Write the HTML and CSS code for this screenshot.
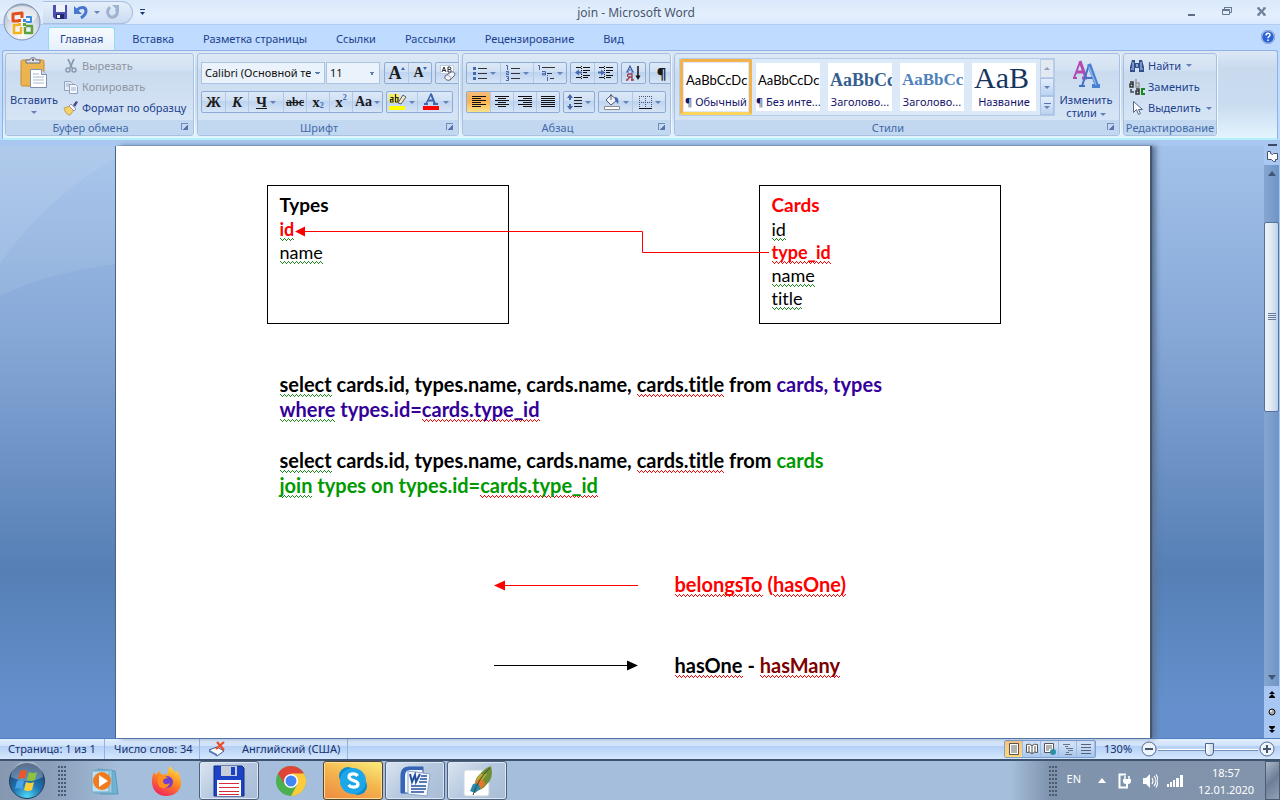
FILE: index.html
```html
<!DOCTYPE html>
<html lang="ru">
<head>
<meta charset="utf-8">
<title>join - Microsoft Word</title>
<link rel="stylesheet" href="styles.css">
</head>
<body>
<header class="titlebar">
  <div class="quick">
    <button class="plain" aria-label="Сохранить"><svg width="16" height="16" viewBox="0 0 16 16"><path d="M1 1h14v14H3l-2-2z" fill="#4a4fb0"/><path d="M4 1h9v7H4z" fill="#eef3fc"/><path d="M4 10h8v5H4z" fill="#23276e"/><path d="M5 11h3v3H5z" fill="#fff"/></svg></button>
    <button class="plain" aria-label="Отменить"><svg width="16" height="16" viewBox="0 0 16 16"><path d="M4 6c4-4 9-3 9 1 0 3-2 5-5 7" fill="none" stroke="#4777cf" stroke-width="3"/><path d="M1 2v8h8z" fill="#4777cf"/></svg></button>
    <i class="arrow"></i>
    <button class="plain redo" aria-label="Повторить"><svg width="16" height="16" viewBox="0 0 16 16"><path d="M5 3C0 8 4 14 8 13c5-1 5-6 3-8" fill="none" stroke="#9eb3d0" stroke-width="3"/><path d="M7 1h7v7z" fill="#9eb3d0"/></svg></button>
  </div>
  <button class="plain customize" aria-label="Настройка панели"><svg width="7" height="8" viewBox="0 0 7 8"><path d="M1 1h5v1H1zM1 4h5L3.500 7z" fill="#1c3c78"/></svg></button>
  <h1 class="title">join - Microsoft Word</h1>
  <div class="winctl">
    <button class="plain" aria-label="Свернуть"><svg width="12" height="12" viewBox="0 0 12 12"><path d="M2 8h7v2H2z" fill="#5d6c85"/></svg></button>
    <button class="plain" aria-label="Развернуть"><svg width="12" height="12" viewBox="0 0 12 12"><path d="M3.500 4V1.500h7v5H9M1.500 3.500h7v5h-7z" fill="none" stroke="#667794"/><path d="M1 3h8v2H1zM3 1h8v1H3z" fill="#667794"/></svg></button>
    <button class="plain" aria-label="Закрыть"><svg width="12" height="12" viewBox="0 0 12 12"><path d="M2 2l7 7M9 2l-7 7" stroke="#72819b" stroke-width="2.400"/><path d="M1 2h3M7 2h3M1 9h3M7 9h3" stroke="#667794" stroke-width="1"/></svg></button>
  </div>
</header>
<button class="plain orb" aria-label="Кнопка Office"><svg width="38" height="38" viewBox="0 0 38 38">
  <defs><radialGradient id="orbg" cx=".5" cy=".8" r=".8"><stop offset="0" stop-color="#fff"/><stop offset=".5" stop-color="#dbe2ed"/><stop offset="1" stop-color="#a3b0c4"/></radialGradient></defs>
  <circle cx="19" cy="19" r="18" fill="url(#orbg)" stroke="#8093b2"/><ellipse cx="19" cy="12" rx="15" ry="9" fill="#fff" opacity=".6"/>
  <g fill="none" stroke-width="3" stroke-linejoin="round"><path d="M16 18h-6v-7l9-1v5" stroke="#e2501b"/><path d="M23 14h5v5h-5" stroke="#3b8cd8" stroke-width="2"/><path d="M16 22h-5v8h7v-6" stroke="#f5b31c" stroke-width="2.500"/><path d="M23 23h6v7h-7v-6" stroke="#5ea13b" stroke-width="2.500"/></g>
  <g><path d="M20 16h3v3h-3z" fill="#3b8cd8"/><path d="M15 20h3v3h-3z" fill="#f5b31c"/><path d="M20 20h3v3h-3z" fill="#5ea13b"/><path d="M15 16h3v3h-3z" fill="#e2501b"/></g></svg></button>
<nav class="tabs">
  <a class="tab active" href="#home">Главная</a>
  <a class="tab" href="#insert">Вставка</a>
  <a class="tab" href="#layout">Разметка страницы</a>
  <a class="tab" href="#links">Ссылки</a>
  <a class="tab" href="#mail">Рассылки</a>
  <a class="tab" href="#review">Рецензирование</a>
  <a class="tab" href="#view">Вид</a>
  <button class="plain help" aria-label="Справка"><svg width="14" height="14" viewBox="0 0 14 14"><circle cx="7" cy="7" r="6.400" fill="#2a62d8" stroke="#fff"/><circle cx="7" cy="7" r="6.800" fill="none" stroke="#446cb4" stroke-width=".6"/><path d="M5 5.500c0-3 4-3 4-.5 0 1.500-2 1.500-2 3.200M7 9.500v1.500" fill="none" stroke="#fff" stroke-width="1.500"/></svg></button>
</nav>
<section class="ribbon">
  <section class="group g-clip">
    <div class="body clip">
      <button class="plain big paste"><svg width="28" height="32" viewBox="0 0 28 32"><rect x="1" y="3" width="23" height="26" rx="1.500" fill="#ecb450" stroke="#c98d31"/><path d="M6 3h4c0-3 6-3 6 0h4v3H6z" fill="#dfe2e8" stroke="#686f7e"/><circle cx="13" cy="3" r="1" fill="#444"/><path d="M10.500 12.500h11l5 5v13h-16z" fill="#fff" stroke="#7f8eaa"/><path d="M21.500 12.500v5h5" fill="#cdd9ef" stroke="#7f8eaa"/><path d="M13 17h6M13 20h11M13 23h11M13 26h11" stroke="#a6b7d6"/></svg>Вставить<i class="arrow"></i></button>
      <div class="stack">
        <button class="plain item off"><svg width="16" height="16" viewBox="0 0 16 16"><path d="M5 1l4 9M11 1L7 10" stroke="#8b99ae" stroke-width="1.800" fill="none"/><g fill="none" stroke="#8b99ae" stroke-width="1.500"><circle cx="5" cy="12" r="2"/><circle cx="11" cy="12" r="2"/></g></svg>Вырезать</button>
        <button class="plain item off"><svg width="16" height="16" viewBox="0 0 16 16"><path d="M1.500 2.500h6l2 2v7h-8z" fill="#e9eff8" stroke="#91a2bd"/><path d="M6.500 5.500h6l2 2v7h-8z" fill="#f4f8fd" stroke="#91a2bd"/><path d="M3 5h4M3 7h3M8 9h5M8 11h5" stroke="#9bacc8"/></svg>Копировать</button>
        <button class="plain item"><svg width="16" height="16" viewBox="0 0 16 16"><path d="M1 8l6-2 4 4-4 5c-3 0-5-3-6-7z" fill="#f3d269" stroke="#b69437" stroke-width=".8"/><path d="M6 6l2-2 5 5-2 2z" fill="#f4f5fa" stroke="#767c93" stroke-width=".7"/><path d="M10 5l3-4 2 1-3 5z" fill="#51478a"/></svg>Формат по образцу</button>
      </div>
    </div>
    <h2 class="cap">Буфер обмена<i class="launch"></i></h2>
  </section>

  <section class="group g-font">
    <div class="body rows">
      <div class="row">
        <span class="combos"><select class="combo wide" aria-label="Шрифт"><option>Calibri (Основной текст)</option></select><select class="combo" aria-label="Размер шрифта"><option>11</option></select></span>
        <span class="bg"><button class="b"><span class="serif s18">A</span><i class="tri up"></i></button><button class="b"><span class="serif s14">A</span><i class="tri down"></i></button></span>
        <span class="bg"><button class="b" aria-label="Очистить формат"><svg width="18" height="18" viewBox="0 0 18 18"><rect x="1.500" y="1.500" width="13" height="8" fill="#fff" stroke="#c2cde0"/><path d="M3 8l2-5 2 5M4 6.500h2M9 3v5h2c2 0 1-2.500 0-2.500H9h2c1.500 0 1-2.500 0-2.500z" fill="none" stroke="#2b2f3a" stroke-width="1"/><path d="M6 12l6-4c3-1 5 2 3 4l-4 4c-3 1-6-1-5-4z" fill="#f3f4fa" stroke="#59617a"/><path d="M8 11c2 0 4 2 4 4" fill="none" stroke="#8d95ad"/></svg></button></span>
      </div>
      <div class="row">
        <span class="bg">
          <button class="b serif"><b>Ж</b></button><button class="b serif"><b><em>К</em></b></button><button class="b w36 serif"><b><u>Ч</u></b><i class="arrow"></i></button><button class="b serif s11"><s>abc</s></button><button class="b serif"><b>x</b><sub>2</sub></button><button class="b serif"><b>x</b><sup>2</sup></button><button class="b w30 serif s14"><span>Aa</span><i class="arrow"></i></button>
        </span>
        <span class="bg">
          <button class="b w30" aria-label="Цвет выделения"><svg width="18" height="18" viewBox="0 0 18 18"><path d="M0 1h10v9H0z" fill="#f8ef50"/><path d="M1.500 4.500h2.500v4.500H1.500V6.500H4M6.500 1v8H9V4.500H6.500" fill="none" stroke="#222" stroke-width="1.200"/><path d="M9 10l5-8 3 2-5 7z" fill="#f6e7be" stroke="#555c71"/><path d="M0 13h16v4H0z" fill="#ff0"/></svg><i class="arrow"></i></button><button class="b w36" aria-label="Цвет текста"><svg width="18" height="18" viewBox="0 0 18 18"><path d="M4 11L9 1l4 10" fill="none" stroke="#4065af" stroke-width="1.500"/><path d="M9 1l4 10M6 7.500h6M2 11h4M11 11h5" fill="none" stroke="#4065af" stroke-width="2"/><path d="M1 13h16v4H1z" fill="red"/></svg><i class="arrow"></i></button>
        </span>
      </div>
    </div>
    <h2 class="cap">Шрифт<i class="launch"></i></h2>
  </section>

  <section class="group g-para">
    <div class="body rows">
      <div class="row">
        <span class="bg">
          <button class="b w33" aria-label="Маркеры"><svg width="16" height="16" viewBox="0 0 16 16"><path d="M1 2h3v3H1zM1 7h3v3H1zM1 12h3v3H1z" fill="#4669ad"/><path d="M6 3.500h9M6 8.500h9M6 13.500h9" stroke="#333"/></svg><i class="arrow"></i></button><button class="b w33" aria-label="Нумерация"><svg width="16" height="16" viewBox="0 0 16 16"><path d="M1 .5h1.500V5M1 6.500h2.500V8H1.500v1.500H4M1 11.500h2.500v4H1M2 13.500h1" fill="none" stroke="#4669ad"/><path d="M6 3.500h9M6 8.500h9M6 13.500h9" stroke="#333"/></svg><i class="arrow"></i></button><button class="b w33" aria-label="Многоуровневый список"><svg width="18" height="16" viewBox="0 0 18 16"><path d="M1 .5h1.500V5M5 6.500h3.500V10H5.500V8.500H8M10.500 12v4M10.500 10v1" fill="none" stroke="#4669ad"/><path d="M5 2.500h13M10 8.500h5M13 13.500h4" stroke="#333"/></svg><i class="arrow"></i></button>
        </span>
        <span class="bg">
          <button class="b" aria-label="Уменьшить отступ"><svg width="16" height="16" viewBox="0 0 16 16"><path d="M1 2.500h5M8 2.500h7M8 5.500h7M8 7.500h4M8 10.500h7M1 12.500h5M8 12.500h5" stroke="#111" stroke-width="1.200"/><path d="M6.500 1v14" stroke="#111" stroke-dasharray="1 1"/><path d="M0 7.500l4-3v2h3v2H4v2z" fill="#4669ad"/></svg></button><button class="b" aria-label="Увеличить отступ"><svg width="16" height="16" viewBox="0 0 16 16"><path d="M1 2.500h5M8 2.500h7M8 5.500h7M8 7.500h4M8 10.500h7M1 12.500h5M8 12.500h5" stroke="#111" stroke-width="1.200"/><path d="M6.500 1v14" stroke="#111" stroke-dasharray="1 1"/><path d="M7 7.500l-4-3v2H0v2h3v2z" fill="#4669ad"/></svg></button>
        </span>
        <span class="bg"><button class="b" aria-label="Сортировка"><svg width="16" height="16" viewBox="0 0 16 16"><path d="M1 7l3-6 3 6M2 5h4M0 7h3M5 7h3" fill="none" stroke="#4065af" stroke-width="1.200"/><path d="M6 15V9H3c-2 0-2 3 0 3h3M4 12l-3 3M0 15h2M5 15h3" fill="none" stroke="#9b3b46" stroke-width="1.300"/><path d="M12 1v12" stroke="#111" stroke-width="1.500"/><path d="M9.500 10.500h5L12 15z" fill="#111"/></svg></button></span>
        <span class="bg"><button class="b s15">¶</button></span>
      </div>
      <div class="row">
        <span class="bg">
          <button class="b on" aria-label="По левому краю"><svg width="16" height="14" viewBox="0 0 16 14"><path d="M1 1.500h14M1 3.500h9M1 5.500h14M1 7.500h9M1 9.500h14M1 11.500h9" stroke="#111" stroke-width="1.200"/></svg></button><button class="b" aria-label="По центру"><svg width="16" height="14" viewBox="0 0 16 14"><path d="M1 1.500h14M4 3.500h8M1 5.500h14M4 7.500h8M1 9.500h14M4 11.500h8" stroke="#111" stroke-width="1.200"/></svg></button><button class="b" aria-label="По правому краю"><svg width="16" height="14" viewBox="0 0 16 14"><path d="M1 1.500h14M6 3.500h9M1 5.500h14M6 7.500h9M1 9.500h14M6 11.500h9" stroke="#111" stroke-width="1.200"/></svg></button><button class="b" aria-label="По ширине"><svg width="16" height="14" viewBox="0 0 16 14"><path d="M1 1.500h14M1 3.500h14M1 5.500h14M1 7.500h14M1 9.500h14M1 11.500h14" stroke="#111" stroke-width="1.200"/></svg></button>
        </span>
        <span class="bg"><button class="b w30" aria-label="Междустрочный интервал"><svg width="16" height="16" viewBox="0 0 16 16"><path d="M3 0l3 4H4v2H2V4H0zM3 16l-3-4h2v-2h2v2h2z" fill="#4669ad"/><path d="M7 3.500h8M7 6.500h8M7 9.500h8M7 12.500h8" stroke="#222" stroke-width="1.200"/></svg><i class="arrow"></i></button></span>
        <span class="bg">
          <button class="b w33" aria-label="Заливка"><svg width="18" height="18" viewBox="0 0 18 18"><path d="M3 7l5-5 6 5-6 5z" fill="#f1f4fa" stroke="#50586c"/><path d="M8 7V1" stroke="#50586c"/><path d="M12 4c3 0 4 3 3 7l-3-4z" fill="#3d67b5"/><path d="M1.500 13.500h15v3h-15z" fill="#fff" stroke="#8c8c8c"/></svg><i class="arrow"></i></button><button class="b w33" aria-label="Границы"><svg width="16" height="16" viewBox="0 0 16 16"><path d="M2 2.500h13M2 8.500h13M2.500 2v12M8.500 2v12M14.500 2v12" stroke="#4b5875" stroke-dasharray="1 1"/><path d="M2 14.500h13" stroke="#111"/></svg><i class="arrow"></i></button>
        </span>
      </div>
    </div>
    <h2 class="cap">Абзац<i class="launch"></i></h2>
  </section>

  <section class="group g-style">
    <div class="body styles">
      <div class="gallery">
        <button class="style sel"><span class="card"><span class="sample">AaBbCcDc</span><span class="name">¶ Обычный</span></span></button>
        <button class="style"><span class="card"><span class="sample">AaBbCcDc</span><span class="name">¶ Без инте...</span></span></button>
        <button class="style"><span class="card"><span class="sample h1s">AaBbCc</span><span class="name">Заголово...</span></span></button>
        <button class="style"><span class="card"><span class="sample h2s">AaBbCc</span><span class="name">Заголово...</span></span></button>
        <button class="style"><span class="card"><span class="sample ts">AaB</span><span class="name">Название</span></span></button>
        <div class="spin"><button class="sb off" aria-label="Вверх"><i class="arrow flip"></i></button><button class="sb" aria-label="Вниз"><i class="arrow"></i></button><button class="sb more" aria-label="Ещё"><i class="arrow"></i></button></div>
      </div>
      <button class="plain big change"><svg width="30" height="30" viewBox="0 0 30 30"><path d="M3 19L9 3M2 19h4" fill="none" stroke="#b04bb0" stroke-width="2"/><path d="M9 2l6 17M5 13h8M11 19h5" fill="none" stroke="#b04bb0" stroke-width="3"/><path d="M11 27L18 6M8 27h6M13 19h9" fill="none" stroke="#3f72c4" stroke-width="2"/><path d="M18 5l8 22M21 27h8" fill="none" stroke="#4a80d4" stroke-width="4"/><path d="M18 8l7 18" stroke="#8db4ee" stroke-width="1.500"/></svg><span class="two">Изменить<br>стили <i class="arrow"></i></span></button>
    </div>
    <h2 class="cap">Стили<i class="launch"></i></h2>
  </section>

  <section class="group g-edit">
    <div class="body stack edit">
      <button class="plain item"><svg width="16" height="16" viewBox="0 0 16 16"><path d="M3 2h3v3h4V2h3l2 7v5h-5v-4H6v4H1V9z" fill="#2f4f8c"/><path d="M4 4v6M12 4v6M2 11h3M11 11h3" stroke="#c7d8f2"/><path d="M7 6h2v3H7z" fill="#88a6d8"/></svg>Найти<i class="arrow"></i></button>
      <button class="plain item"><svg width="16" height="16" viewBox="0 0 16 16"><g fill="none" stroke-width="1.500"><path d="M1 3h3v5H1V5h3" stroke="#333"/><path d="M7 0v8h3V4H7" stroke="#999"/><path d="M7 10h3v5H7v-3h3" stroke="#333"/><path d="M16 10h-3v5h3" stroke="#188a18" stroke-width="2"/><path d="M2 10v3h3" stroke="#445"/></g></svg>Заменить</button>
      <button class="plain item"><svg width="16" height="16" viewBox="0 0 16 16"><path d="M4.500 1.500v11l3-3 2 5 2-1-2-4h4z" fill="#fff" stroke="#54658c"/></svg>Выделить<i class="arrow"></i></button>
    </div>
    <h2 class="cap">Редактирование</h2>
  </section>
</section>

<main class="workspace">
  <div class="desk">
    <svg class="swoosh" viewBox="0 0 116 592" preserveAspectRatio="none" aria-hidden="true"><path d="M0 0h116v118Q50 126 0 150z" fill="#fff" opacity=".08"/><path d="M0 0h116v12Q45 52 0 118z" fill="#fff" opacity=".08"/></svg>
    <article class="page">
      <div class="diagram">
        <div class="entity"><h3>Types</h3><p><b class="red gr">id</b></p><p><span class="gr">name</span></p></div>
        <div class="entity"><h3 class="red">Cards</h3><p><span class="gr">id</span></p><p><b class="red rd">type_id</b></p><p><span class="gr">name</span></p><p><span class="gr">title</span></p></div>
        <svg class="link" width="474" height="28" viewBox="0 0 474 28" aria-hidden="true"><path d="M8 6.500h339.500v21H474" fill="none" stroke="red"/><path d="M0 6.500l10-5v10z" fill="red"/></svg>
      </div>
      <div class="query">
        <p><span class="gr">select</span> cards.id, types.name, cards.name, <span class="rd">cards.title</span> from <span class="blue">cards, types</span></p>
        <p class="blue"><span class="gr">where</span> types.id=<span class="rd">cards.type_id</span></p>
      </div>
      <div class="query">
        <p><span class="gr">select</span> cards.id, types.name, cards.name, <span class="rd">cards.title</span> from <span class="green">cards</span></p>
        <p class="green"><span class="gr">join</span> types on types.id=<span class="rd">cards.type_id</span></p>
      </div>
      <div class="legend">
        <svg width="144" height="13" viewBox="0 0 144 13" aria-hidden="true"><path d="M8 7.500h136" stroke="red"/><path d="M0 7.500l11-5v10z" fill="red"/></svg>
        <p class="red"><span class="rd">belongsTo</span> (<span class="rd">hasOne)</span></p>
        <svg width="144" height="13" viewBox="0 0 144 13" aria-hidden="true"><path d="M0 6.500h136" stroke="#000"/><path d="M144 6.500l-11-5v10z"/></svg>
        <p><span class="rd">hasOne</span> - <span class="maroon rd">hasMany</span></p>
      </div>
    </article>
  </div>
  <aside class="scroll">
    <button class="plain split" aria-label="Линейка"><svg width="12" height="18" viewBox="0 0 12 18"><path d="M2 0h9v2H2z" fill="#3d4a66"/><path d="M1.500 7.500h3v2l2 1 1-1h4v6h-2v2h-2l-2-2h-4z" fill="#fff" stroke="#47536f"/></svg></button>
    <div class="track">
      <button class="plain step" aria-label="Прокрутить вверх"><i class="big-tri"></i></button>
      <div class="thumb"><i class="grip"></i></div>
      <button class="plain step last" aria-label="Прокрутить вниз"><i class="big-tri dn"></i></button>
    </div>
    <div class="nav">
      <button class="plain" aria-label="Предыдущая страница"><svg width="8" height="8" viewBox="0 0 8 8"><path d="M4 0l3 3H1zM4 3l3 3H1zM1 6h6v1H1z"/></svg></button>
      <button class="plain" aria-label="Объект перехода"><svg width="8" height="8" viewBox="0 0 8 8"><circle cx="4" cy="4" r="3" fill="#aaa" stroke="#111"/><circle cx="3" cy="3" r="1" fill="#fff"/></svg></button>
      <button class="plain" aria-label="Следующая страница"><svg width="8" height="8" viewBox="0 0 8 8"><path d="M4 8L1 5h6zM4 5L1 2h6zM1 1h6v1H1z"/></svg></button>
    </div>
  </aside>
</main>

<footer class="status">
  <span class="cell c1">Страница: 1 из 1</span>
  <span class="cell c2">Число слов: 34</span>
  <span class="cell c3"><svg width="18" height="16" viewBox="0 0 18 16"><path d="M1 9l8-3 7 4-7 5z" fill="#fff" stroke="#3e5b95"/><path d="M1 9l8 4v2L1 11z" fill="#5478bb"/><path d="M9 1l7 8M16 1L8 8" stroke="#ee4b22" stroke-width="2.200"/></svg>Английский (США)</span>
  <span class="fill"></span>
  <span class="views">
    <button class="v on" aria-label="Разметка страницы"><svg width="12" height="12" viewBox="0 0 12 12"><path d="M1.500.5h9v11h-9z" fill="#fff" stroke="#555"/><path d="M3 3h6M3 5h6M3 7h6M3 9h6" stroke="#666"/></svg></button><button class="v" aria-label="Режим чтения"><svg width="12" height="12" viewBox="0 0 12 12"><path d="M.5 1.500q3-1 5.500 1 2.500-2 5.500-1v8q-3-1-5.500 1-2.500-2-5.500-1z" fill="#fff" stroke="#555"/><path d="M6 2v9M2 4h2M2 6h2M8 4h2M8 6h2M2 8h2M8 8h2" stroke="#555"/></svg></button><button class="v" aria-label="Веб-документ"><svg width="12" height="12" viewBox="0 0 12 12"><path d="M.5.500h9v9h-9z" fill="#fff" stroke="#555"/><path d="M2 3h6M2 5h6M2 7h3" stroke="#666"/><circle cx="9" cy="9" r="3" fill="#2c8fa4"/></svg></button><button class="v" aria-label="Структура"><svg width="12" height="12" viewBox="0 0 12 12"><path d="M1 1.500h7M3 3.500h3M4 5.500h7M6 7.500h5M4 9.500h3M3 11.500h7" stroke="#68758b"/></svg></button><button class="v" aria-label="Черновик"><svg width="12" height="12" viewBox="0 0 12 12"><path d="M1 1.500h10M1 4.500h10M1 7.500h10M1 10.500h10" stroke="#56617a"/></svg></button>
  </span>
  <span class="pct">130%</span>
  <button class="zoom" aria-label="Уменьшить"><svg width="16" height="16" viewBox="0 0 16 16"><circle cx="8" cy="8" r="7" fill="#eef4fc" stroke="#546d94"/><path d="M4 8h8" stroke="#47556e" stroke-width="2"/></svg></button>
  <input class="range" type="range" min="0" max="100" value="52" aria-label="Масштаб">
  <button class="zoom" aria-label="Увеличить"><svg width="16" height="16" viewBox="0 0 16 16"><circle cx="8" cy="8" r="7" fill="#eef4fc" stroke="#546d94"/><path d="M4 8h8M8 4v8" stroke="#47556e" stroke-width="2"/></svg></button>
</footer>

<footer class="taskbar">
  <button class="plain start" aria-label="Пуск"><svg width="38" height="38" viewBox="0 0 38 38"><defs><radialGradient id="st" cx=".5" cy=".95" r=".9"><stop offset="0" stop-color="#4fd8f5"/><stop offset=".45" stop-color="#2077b5"/><stop offset="1" stop-color="#1d3c68"/></radialGradient></defs><circle cx="19" cy="19" r="17.500" fill="url(#st)" stroke="#273c58"/><path d="M3 15a16 16 0 0 1 32 0q-16 8-32 0z" fill="#fff" opacity=".28"/><path d="M12 9q4-2 7 0l-2 8q-3-2-7 0z" fill="#e8582b"/><path d="M21 10q4 2 8 0l-2 8q-4 2-8 0z" fill="#8fc13e"/><path d="M9 19q4-2 7 0l-2 8q-3-2-7 0z" fill="#4aa3e8"/><path d="M18 20q4 2 8 0l-2 8q-4 2-8 0z" fill="#fbce3b"/></svg></button>
  <i class="dots"></i>
  <div class="apps">
    <button class="app" aria-label="Windows Media Player"><svg width="30" height="30" viewBox="0 0 30 30"><path d="M8 3l17 2 3 23H10z" fill="#6fb2d2" stroke="#5a9abf"/><path d="M5 4h17v23H5z" fill="#9bd0e5" stroke="#64a4c3"/><path d="M2 5h17v21H2z" fill="#bfe0ee" stroke="#70abc8"/><circle cx="12" cy="15" r="9" fill="#f27a1d"/><path d="M9 9l9 6-9 6z" fill="#fff"/></svg></button>
    <button class="app" aria-label="Firefox"><svg width="32" height="32" viewBox="0 0 32 32"><defs><linearGradient id="ff" x1=".8" y1="0" x2=".3" y2="1"><stop offset="0" stop-color="#ffe14a"/><stop offset=".45" stop-color="#ff8a1f"/><stop offset="1" stop-color="#f0245e"/></linearGradient></defs><path d="M19 1c2 2 3 4 5 6l2-1c8 11 4 24-10 25C2 31-2 18 3 7l2 3 3-4 3 4q4-2 6 0-1-5 2-9z" fill="url(#ff)"/><circle cx="16" cy="17" r="6" fill="#7141cd"/><path d="M7 12q6-3 10 1-5 0-5 4 2 4 7 1-2 6-8 5-6-2-4-11z" fill="#ff8d20"/></svg></button>
    <button class="app open" aria-label="Total Commander"><svg width="32" height="32" viewBox="0 0 32 32"><path d="M1 1h28l2 2v28H1z" fill="#1c43c5" stroke="#132c83"/><path d="M8 1h16v10H8z" fill="#c6ced8"/><path d="M18 2h4v8h-4z" fill="#1c43c5"/><path d="M4 15h24v16H4z" fill="#fff"/><path d="M6 18.500h20M6 22.500h20M6 26.500h20M6 29.500h20" stroke="#d62c3a"/></svg></button>
    <button class="app" aria-label="Chrome"><svg width="32" height="32" viewBox="0 0 32 32"><circle cx="16" cy="16" r="15" fill="#4caf50"/><path d="M16 16L3 8.500A15 15 0 0 1 29 8.500z" fill="#e04438"/><path d="M29 8.500A15 15 0 0 1 16 31l6.500-12L16 8.500z" fill="#fbcb3c"/><path d="M3 8.500l7 11 6-11z" fill="#e04438"/><circle cx="16" cy="16" r="7" fill="#fff"/><circle cx="16" cy="16" r="5.500" fill="#4285f4"/></svg></button>
    <button class="app open alert" aria-label="Skype"><svg width="32" height="32" viewBox="0 0 32 32"><circle cx="11" cy="11" r="9" fill="#0b8bd0"/><circle cx="21" cy="21" r="9" fill="#0b8bd0"/><circle cx="16" cy="16" r="13" fill="#1ba7ea"/><path d="M20.500 11c-2-3-8.500-3-8.500 1s9 3 9 7c0 4-7 4-9.500 1" fill="none" stroke="#fff" stroke-width="3.200"/></svg></button>
    <button class="app open" aria-label="Word"><svg width="32" height="32" viewBox="0 0 32 32"><path d="M2 10q0-8 8-8h14v26H2z" fill="#f2f6fc" stroke="#2855a4"/><path d="M2 28V10q0-8 8-8h14v3H11q-5 0-5 6v17z" fill="#3465b8"/><path d="M9 6l22 3-3 22-19-2z" fill="#f5f8fd" stroke="#8fa5cb"/><path d="M11 9l2 8 3-7 1 7 4-8" fill="none" stroke="#26509f" stroke-width="2"/><path d="M22 11h6M21 14h7M20 17h8M12 21h15M12 24h15M12 27h13" stroke="#26509f" stroke-width="1.600"/></svg></button>
    <button class="app open" aria-label="Редактор"><svg width="32" height="32" viewBox="0 0 32 32"><rect x="3" y="5" width="25" height="26" rx="2" fill="#fff" stroke="#ccd4df"/><path d="M30 1q3 12-4 18-4 6-12 7-2-11 5-17 5-6 11-8z" fill="#6f8f36"/><path d="M19 9q-4 4-5 9l6-1 6-8z" fill="#b9a83a"/><path d="M15 15q9-2 9 5-5 5-11 6z" fill="#e07a2c"/><path d="M12 19q7-2 7 5l-5 4-5-2z" fill="#2a87b0"/><path d="M29 3Q18 12 12 30" fill="none" stroke="#3b4d1e"/></svg></button>
  </div>
  <div class="tray">
    <i class="dots"></i>
    <span class="lang">EN</span>
    <button class="plain" aria-label="Скрытые значки"><svg width="8" height="6" viewBox="0 0 8 6"><path d="M4 0l4 5H0z" fill="#fff"/></svg></button>
    <span class="tico first"><svg width="16" height="16" viewBox="0 0 16 16"><path d="M9 1.500H2.500v13H10V12" fill="none" stroke="#fff" stroke-width="2"/><path d="M8 3v3M12 3v3" stroke="#fff" stroke-width="1.500"/><path d="M6 6h8v2q0 3-3 3v3H9v-3Q6 11 6 8z" fill="#fff"/></svg></span>
    <span class="tico"><svg width="16" height="16" viewBox="0 0 16 16"><path d="M1 5h3l4-4v14l-4-4H1z" fill="#fff"/><path d="M10 5q2 3 0 6M12 3q4 5 0 10M14 1.500q4 6 0 13" fill="none" stroke="#fff" stroke-width="1.200"/></svg></span>
    <span class="tico"><svg width="16" height="16" viewBox="0 0 16 16"><path d="M0 11h2v3H0zM3 9h2v5H3zM6 7h2v7H6zM9 5h3v9H9zM13 2h3v12h-3z" fill="#fff"/></svg></span>
    <time class="clock">18:57<br>12.01.2020</time>
    <button class="plain peek" aria-label="Показать рабочий стол"></button>
  </div>
</footer>
</body>
</html>
```
FILE: styles.css
```css
* { box-sizing: border-box; margin: 0; padding: 0; }
body {
  min-height: 100vh; display: flex; flex-direction: column; position: relative;
  font: 11px/16px "Noto Sans", "Open Sans", sans-serif; color: #1c3f8c;
  background: #bfdbff; overflow: hidden;
}
button, select { font: inherit; color: inherit; border: 0; background: none; }
button { display: flex; align-items: center; justify-content: center; }
h1, h2 { font: inherit; }
svg { display: block; flex: none; }
a { color: inherit; text-decoration: none; }
.arrow { flex: none; display: inline-block; border: 3px solid transparent; border-top-color: #6482b6; border-bottom: 0; vertical-align: middle; }
.flip { transform: rotate(180deg); }

.titlebar { display: flex; align-items: center; height: 25px; padding-left: 43px; background: linear-gradient(#d9e8fb, #e4effd 60%, #dbeafd); border-bottom: 1px solid #b3cdee; }
.quick { display: flex; align-items: center; gap: 5px; height: 23px; padding: 0 11px 0 9px; border: 1px solid #a9bfdf; border-left: 0; border-radius: 0 12px 12px 0; background: linear-gradient(#e6effb, #cbdcf2); }
.customize { margin-left: 6px; }
.title { flex: 1; text-align: center; color: #48566e; padding: 2px 60px 0 0; font-size: 12px; }
.winctl { display: flex; gap: 23px; padding-right: 12px; }
.orb { position: absolute; left: 3px; top: 3px; z-index: 2; }

.tabs { display: flex; align-items: flex-end; gap: 5px; height: 25px; padding: 0 5px 0 48px; }
.tab { padding: 4px 12px 3px; height: 23px; }
.tab.active { padding: 3px 11px; border: 1px solid #8fdcf0; border-bottom: 0; border-radius: 3px 3px 0 0; background: linear-gradient(#f7fbff, #e6effa); }
.help { margin: 0 0 6px auto; }

.ribbon { display: flex; gap: 3px; height: 90px; margin: 0 2px; padding: 2px; border: 1px solid #8db2e3; border-bottom: 2px solid #b3f0fa; border-radius: 3px; background: linear-gradient(#dce8f6, #c9daee 20%, #c8dbf0 60%, #e3f4fd); }
.group { display: flex; flex-direction: column; border: 1px solid #a8c1e1; border-radius: 3px; overflow: hidden; background: linear-gradient(#dde8f5, #d2e1f2 20%, #cadbef 21%, #d9e8f8); box-shadow: 1px 0 #eef5fd; }
.g-clip { width: 189px; }
.g-font { width: 262px; }
.g-para { width: 209px; }
.g-style { width: 446px; }
.g-edit { width: 94px; }
.body { flex: 1; min-height: 0; }
.cap { position: relative; height: 15px; line-height: 15px; text-align: center; color: #4468a9; background: #c1d8f0; padding-right: 18px; white-space: nowrap; }
.g-edit .cap { padding: 0; }
.launch { position: absolute; right: 5px; top: 3px; width: 7px; height: 7px; border: solid #6f8dbb; border-width: 1px 0 0 1px; background: linear-gradient(135deg, transparent 50%, #5674aa 51%); }
.clip { display: flex; }
.big { flex-direction: column; justify-content: flex-start; gap: 4px; padding-top: 3px; line-height: 13px; }
.paste { width: 56px; }
.paste .arrow { margin-top: 1px; }
.stack { display: flex; flex-direction: column; padding: 1px 0; }
.item { justify-content: flex-start; gap: 3px; height: 22px; padding-left: 1px; white-space: nowrap; }
.item .arrow { margin-left: 2px; }
.item.off { color: #8f95a0; }
.edit { padding-left: 4px; }

.rows { display: flex; flex-direction: column; gap: 7px; padding: 8px 3px 0; }
.row { display: flex; gap: 3px; }
.combos { display: flex; gap: 1px; margin-right: 1px; }
.combo {
  appearance: none; width: 54px; height: 22px; padding: 0 13px 0 3px; border: 1px solid #abc3e4; color: #111; overflow: hidden;
  background: conic-gradient(from -45deg at 50% 100%, #5b7ab0 90deg, transparent 0) right 4px center / 6px 3px no-repeat, #eaf2fb;
}
.combo.wide { width: 124px; }
.bg { display: flex; height: 22px; border: 1px solid #8facd6; border-radius: 2px; background: linear-gradient(#dde9f7, #cfdff3 45%, #bed3ef 46%, #d6e5f7); }
.b { position: relative; width: 23px; gap: 2px; color: #1b1b1b; }
.b + .b { border-left: 1px solid #b2c8e6; }
.b.w30 { width: 30px; }
.b.w33 { width: 33px; }
.b.w36 { width: 35px; gap: 3px; }
.b.on { background: linear-gradient(#f6bb7c, #fbb24e 45%, #f9e28a); }
.serif { font-family: "Liberation Serif", serif; font-size: 15px; }
.s18 { font-size: 18px; font-weight: 700; }
.s14 { font-size: 14px; font-weight: 700; }
.s15 { font-size: 15px; font-weight: 700; }
.s11 { font-size: 12px; font-weight: 700; }
.b sub, .b sup { font-size: 8px; line-height: 8px; color: #3d67b5; font-weight: 700; margin-left: -2px; }
.b sub { align-self: flex-end; padding-bottom: 2px; }
.b sup { align-self: flex-start; padding-top: 2px; }
.tri { align-self: flex-start; margin-top: 4px; margin-left: -3px; border: 2px solid transparent; }
.tri.up { border-bottom: 3px solid #3d67b5; border-top: 0; }
.tri.down { border-top: 3px solid #3d67b5; border-bottom: 0; }

.styles { display: flex; justify-content: space-between; padding: 4px 3px 4px 4px; }
.gallery { display: flex; border: 1px solid #b5cbe8; background: #dce9f8; }
.style { width: 72px; padding: 4px; }
.style.sel { padding: 1px; border: 3px solid #f3b34a; border-bottom-color: #fbd45c; border-radius: 2px; }
.card { display: flex; flex-direction: column; width: 64px; height: 48px; background: #fff; white-space: nowrap; color: #000; }
.sample { height: 32px; padding: 0 2px; font: 13px/34px Lato, sans-serif; text-align: left; overflow: hidden; }
.name { color: #15156e; line-height: 14px; text-align: center; }
.h1s { font: 700 18px/34px "Liberation Serif", serif; color: #365f91; }
.h2s { font: 700 17px/34px "Liberation Serif", serif; color: #4f81bd; }
.ts { font: 30px/30px "Liberation Serif", serif; color: #17365d; }
.spin { display: flex; flex-direction: column; width: 14px; }
.sb { flex: 1; border: 1px solid #a9c3e6; background: linear-gradient(#e4eefb, #bcd3f1); }
.sb.off { background: #e7e9ed; opacity: .7; }
.more { flex-direction: column; gap: 2px; }
.more::before { content: ""; width: 7px; border-top: 1px solid #5876ae; }
.change { width: 60px; padding-top: 1px; white-space: nowrap; }

.workspace { flex: 1; display: flex; min-height: 0; padding-top: 6px; background: #a9c7f0; }
.desk { position: relative; flex: 1; display: flex; justify-content: center; background: linear-gradient(#a3c2ea, #86a8d7 32%, #6c91c4 54%, #557fb5 72%, #6690cd 95%); }
.swoosh { position: absolute; left: 0; top: 0; width: 116px; height: 100%; }
.page { position: relative; width: 1035px; max-width: 100%; padding: 39px 149px 0 151px; background: #fff; color: #000; border-left: 1px solid #4a6489; box-shadow: 2px 0 1px #44566f, 6px 0 5px #5f7799; font: 18px/25px Lato, sans-serif; font-variant-ligatures: none; }
.diagram { position: relative; display: flex; justify-content: space-between; margin-bottom: 48px; }
.entity { width: 242px; min-height: 139px; padding: 5px 12px; border: 1px solid #000; line-height: 23px; }
.entity h3 { font-size: 19px; line-height: 27px; }
.link { position: absolute; left: 28px; top: 40px; }
.query { margin: 0 0 26px 13px; font-size: 20px; font-weight: 700; white-space: nowrap; }
.legend { display: grid; grid-template-columns: 144px auto; gap: 56px 37px; align-items: center; margin: 74px 0 0 227px; font-size: 20px; font-weight: 700; }
.red { color: #f00; }
.blue { color: #309; }
.green { color: #090; }
.maroon { color: #7c0000; }
.gr { --w: #1c8a1c; }
.rd { --w: #f00; }
.gr, .rd {
  padding-bottom: 1px;
  background: linear-gradient(90deg, var(--w) 1px, transparent 0) 0 calc(100% - 2px) / 4px 1px repeat-x,
    linear-gradient(90deg, var(--w) 1px, transparent 0) 1px calc(100% - 1px) / 2px 1px repeat-x,
    linear-gradient(90deg, var(--w) 1px, transparent 0) 2px 100% / 4px 1px repeat-x;
}

.scroll { display: flex; flex-direction: column; width: 16px; padding: 0 1px 0 0; background: #a9c7f3; }
.split { height: 21px; align-items: flex-start; margin-top: -2px; }
.track { flex: 1; display: flex; flex-direction: column; background: linear-gradient(90deg, #86a6d1, #6f95c5); }
.step { height: 17px; }
.last { margin-top: auto; }
.big-tri { border: 4px solid transparent; border-bottom: 5px solid #425478; border-top: 0; }
.big-tri.dn { transform: rotate(180deg); }
.thumb { display: flex; align-items: center; justify-content: center; height: 190px; margin-top: 40px; border: 1px solid #56719b; border-radius: 2px; background: linear-gradient(90deg, #eef3f8, #dfe9f3 50%, #bccfe8); }
.grip { width: 8px; height: 8px; background: repeating-linear-gradient(#697b98 0 1px, transparent 1px 2px); }
.nav { display: flex; flex-direction: column; align-items: center; gap: 9px; padding: 5px 0; }

.status { display: flex; align-items: center; height: 23px; color: #15306e; border-top: 1px solid #4f7fc0; border-bottom: 2px solid #3d526f; background: linear-gradient(#e2eefe, #cfe1fa 35%, #b4d0f5 36%, #d5e7fd); }
.cell { display: flex; align-items: center; gap: 16px; height: 100%; border-right: 1px solid #8fb3e2; white-space: nowrap; }
.c1 { width: 105px; padding-left: 8px; }
.c2 { width: 95px; padding-left: 9px; }
.c3 { width: 148px; padding-left: 8px; }
.fill { flex: 1; }
.views { display: flex; height: 18px; border: 1px solid #7da1d4; border-radius: 2px; background: linear-gradient(#d9e7f9, #a9c6ed); }
.v { width: 18px; border-right: 1px solid #9ebce5; }
.v.on { background: linear-gradient(#f9c483, #fbd978); }
.pct { width: 44px; padding-left: 8px; }
.zoom { width: 18px; height: 20px; }
.range { appearance: none; width: 100px; height: 18px; background: linear-gradient(#fff, #fff) center / 100% 1px no-repeat, linear-gradient(#7391bd, #7391bd) 0 10px / 100% 1px no-repeat; }
.range::-webkit-slider-thumb { appearance: none; width: 9px; height: 13px; border: 1px solid #4d6690; border-radius: 1px 1px 5px 5px; background: linear-gradient(90deg, #fff, #c7d6eb); }
.status .zoom:last-child { margin-right: 4px; }

.taskbar { display: flex; align-items: center; height: 39px; padding-left: 8px; background: linear-gradient(90deg, #8698b0 0, #8a9fba 50px, #a5bedb 120px, #a5bedb 1010px, #7f93ad 1050px, #8294ab 100%); }
.start { width: 38px; }
.dots { width: 9px; height: 30px; margin-left: 12px; background: radial-gradient(circle at 1px 1px, #4a5a70 1px, transparent 1px) 0 0 / 3px 4px; }
.apps { display: flex; gap: 2px; margin-left: 8px; }
.app { width: 60px; height: 39px; border-radius: 3px; }
.app.open { border: 1px solid #4e617c; background: linear-gradient(135deg, #dbe5f1, #b5c8df 50%, #a8bdd6); box-shadow: inset 0 0 0 1px #dce7f3; }
.app.alert { border-color: #57462e; background: linear-gradient(20deg, #ee8a42, #f4b24c 50%, #f9ef78); box-shadow: inset 0 0 0 1px #fbdc9a; }
.tray { display: flex; align-items: center; height: 100%; margin-left: auto; color: #fff; }
.lang { padding: 0 17px 3px 9px; }
.tico { padding-left: 9px; }
.tico.first { padding-left: 11px; }
.clock { width: 78px; margin-left: 4px; text-align: center; line-height: 17px; }
.peek { width: 15px; height: 100%; border: 1px solid #4c5c73; background: linear-gradient(135deg, #aab7c7, #6c7e96 50%, #92a2b6); }
```
